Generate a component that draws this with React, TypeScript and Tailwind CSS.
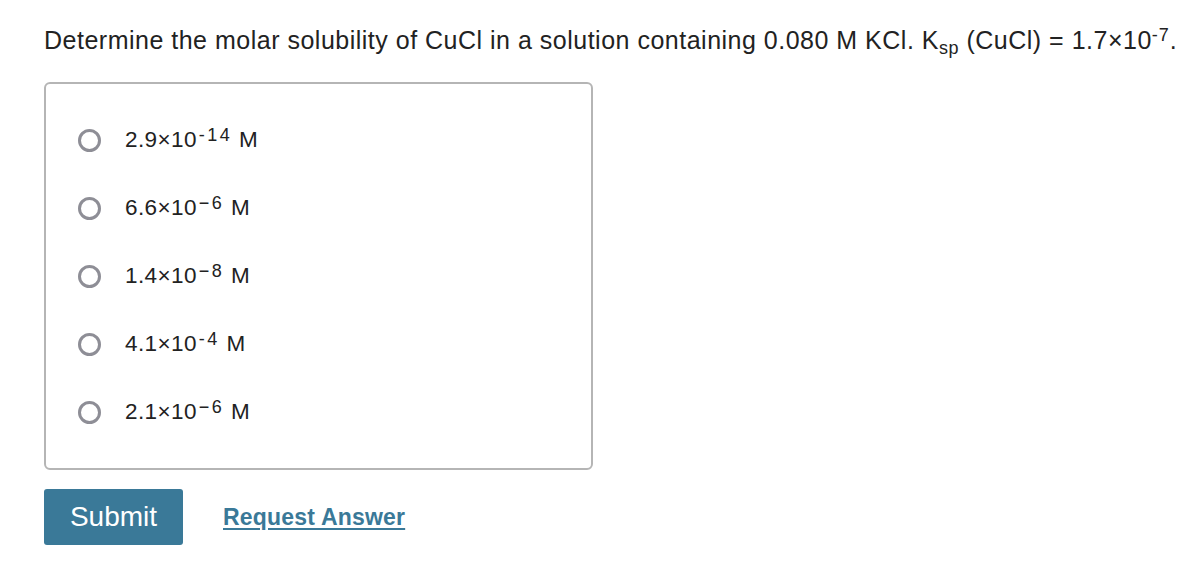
import React from 'react';

const options: { base: string; exp: string }[] = [
  { base: '2.9×10', exp: '-14' },
  { base: '6.6×10', exp: '−6' },
  { base: '1.4×10', exp: '−8' },
  { base: '4.1×10', exp: '-4' },
  { base: '2.1×10', exp: '−6' },
];

export default function App() {
  return (
    <div className="min-h-[562px] w-[1186px] bg-white text-[#222] pl-[44px] pt-[22px]" style={{ fontFamily: '"Liberation Sans", Arial, sans-serif' }}>
      <p className="text-[25px] leading-[36px] tracking-[0.5px] whitespace-nowrap">
        Determine the molar solubility of CuCl in a solution containing 0.080 M KCl. K
        <span className="text-[18px] leading-none relative top-[5px]">sp</span> (CuCl) = 1.7×10
        <span className="text-[18px] leading-none relative -top-[8px] tracking-[1px]">-7</span>.
      </p>

      <div className="mt-[24px] w-[549px] h-[388px] border-2 border-[#b5b5b5] rounded-[6px] pt-[40px] pl-[32px]">
        <div className="flex flex-col gap-[36px]">
          {options.map((o, i) => (
            <label key={i} className="flex items-center h-[32px] cursor-pointer">
              <span className="w-[23px] h-[23px] rounded-full border-[3px] border-[#8e8e96] box-border" />
              <span className="ml-[24px] text-[22.5px] leading-[32px] tracking-[0.4px] whitespace-nowrap">
                {o.base}
                <span className="text-[18px] leading-none relative -top-[6px] ml-[2px] tracking-[2.5px]">{o.exp}</span> M
              </span>
            </label>
          ))}
        </div>
      </div>

      <div className="mt-[19px] flex items-center">
        <button className="w-[139px] h-[56px] rounded-[3px] bg-[#3a7998] text-white text-[28px]">Submit</button>
        <a href="#" className="ml-[40px] text-[23px] font-bold tracking-[0.2px] text-[#3a7998] underline underline-offset-[3px]">
          Request Answer
        </a>
      </div>
    </div>
  );
}
